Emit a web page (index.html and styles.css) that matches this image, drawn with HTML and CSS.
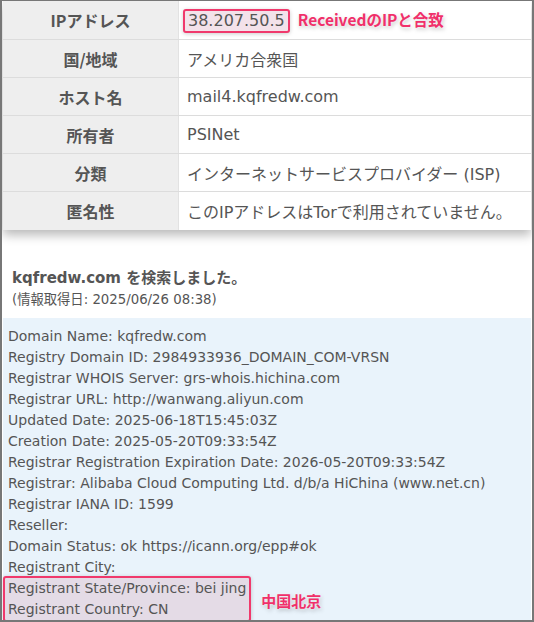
FILE: index.html
```html
<!DOCTYPE html>
<html lang="ja">
<head>
  <meta charset="UTF-8">
  <meta name="viewport" content="width=device-width, initial-scale=1.0">
  <title>IP / WHOIS</title>
  <link rel="stylesheet" href="styles.css">
</head>
<body>
  <div class="frame">

    <!-- IP info table -->
    <table class="ip-table">
      <tr>
        <th>IPアドレス</th>
        <td>
          <span class="mark">38.207.50.5</span>
          <span class="note">ReceivedのIPと合致</span>
        </td>
      </tr>
      <tr><th>国/地域</th><td>アメリカ合衆国</td></tr>
      <tr><th>ホスト名</th><td>mail4.kqfredw.com</td></tr>
      <tr><th>所有者</th><td>PSINet</td></tr>
      <tr><th>分類</th><td>インターネットサービスプロバイダー (ISP)</td></tr>
      <tr><th>匿名性</th><td>このIPアドレスはTorで利用されていません。</td></tr>
    </table>

    <div class="search-head">
      <h2>kqfredw.com を検索しました。</h2>
      <p>(情報取得日: 2025/06/26 08:38)</p>
    </div>

    <!-- WHOIS result -->
    <div class="whois">
      <div>Domain Name: kqfredw.com</div>
      <div>Registry Domain ID: 2984933936_DOMAIN_COM-VRSN</div>
      <div>Registrar WHOIS Server: grs-whois.hichina.com</div>
      <div>Registrar URL: http://wanwang.aliyun.com</div>
      <div>Updated Date: 2025-06-18T15:45:03Z</div>
      <div>Creation Date: 2025-05-20T09:33:54Z</div>
      <div>Registrar Registration Expiration Date: 2026-05-20T09:33:54Z</div>
      <div>Registrar: Alibaba Cloud Computing Ltd. d/b/a HiChina (www.net.cn)</div>
      <div>Registrar IANA ID: 1599</div>
      <div>Reseller:</div>
      <div>Domain Status: ok https://icann.org/epp#ok</div>
      <div>Registrant City:</div>
      <div class="mark-row">
        <div class="mark-block">
          <div>Registrant State/Province: bei jing</div>
          <div>Registrant Country: CN</div>
        </div>
        <span class="note">中国北京</span>
      </div>
    </div>

  </div>
</body>
</html>
```

FILE: styles.css
```css
body {
  margin: 0;
  font-family: "DejaVu Sans", "Noto Sans CJK JP", sans-serif;
  color: #555;
  background: #fff;
}

.frame {
  width: 534px;
  height: 622px;
  box-sizing: border-box;
  border: 2px solid #777;
  border-top-width: 1px;
  padding: 0 1px;
  overflow: hidden;
}

/* table */
.ip-table {
  width: 100%;
  border-collapse: collapse;
  box-shadow: 0 5px 10px rgba(0, 0, 0, 0.28);
}

.ip-table th,
.ip-table td {
  height: 37px;
  padding: 0 8px;
  border-bottom: 1px solid #dcdcdc;
  font-size: 16px;
}

.ip-table tr:first-child th,
.ip-table tr:first-child td {
  height: 38px;
}

.ip-table tr:last-child th,
.ip-table tr:last-child td {
  height: 38px;
  border-bottom: none;
}

.ip-table th {
  width: 159px;
  background: #eeeeee;
  font-family: "Noto Sans CJK JP", sans-serif;
  font-weight: bold;
  text-align: center;
  border-right: 1px solid #e2e2e2;
}

.ip-table td {
  text-align: left;
  background: #fff;
  font-family: "DejaVu Sans", "Noto Sans CJK JP", sans-serif;
}

.mark {
  display: inline-block;
  margin-left: -4px;
  padding: 0 3px;
  line-height: 20px;
  border: 2px solid #f0396c;
  border-radius: 3px;
  background: #f3e2ea;
  box-shadow: 0 1px 4px rgba(0, 0, 0, 0.2);
}

.note {
  margin-left: 3px;
  color: #f0306a;
  font-family: "Noto Sans CJK JP", sans-serif;
  font-weight: bold;
  font-size: 15.5px;
  text-shadow: 0 0 3px #fff, 1px 2px 4px rgba(0, 0, 0, 0.25);
}

/* heading */
.search-head {
  padding: 37px 9px 8px;
}

.search-head h2 {
  margin: 0;
  font-size: 15px;
  line-height: 23px;
  font-family: "DejaVu Sans", "Noto Sans CJK JP", sans-serif;
  font-weight: bold;
}

.search-head p {
  margin: 0;
  font-size: 13.3px;
  line-height: 20px;
}

/* whois box */
.whois {
  background: #e9f3fb;
  padding: 8px 0 0 5px;
  font-size: 14px;
  line-height: 21px;
  height: 400px;
}

.mark-row {
  display: flex;
  align-items: center;
  margin-left: -5px;
}

.mark-block {
  margin-top: -2px;
  padding: 0 3px 0 3px;
  border: 2px solid #f0396c;
  border-radius: 3px;
  background: #e4dbe6;
  box-shadow: 0 1px 4px rgba(0, 0, 0, 0.2);
}

.mark-row .note {
  margin-left: 10px;
  font-size: 15px;
}
```
